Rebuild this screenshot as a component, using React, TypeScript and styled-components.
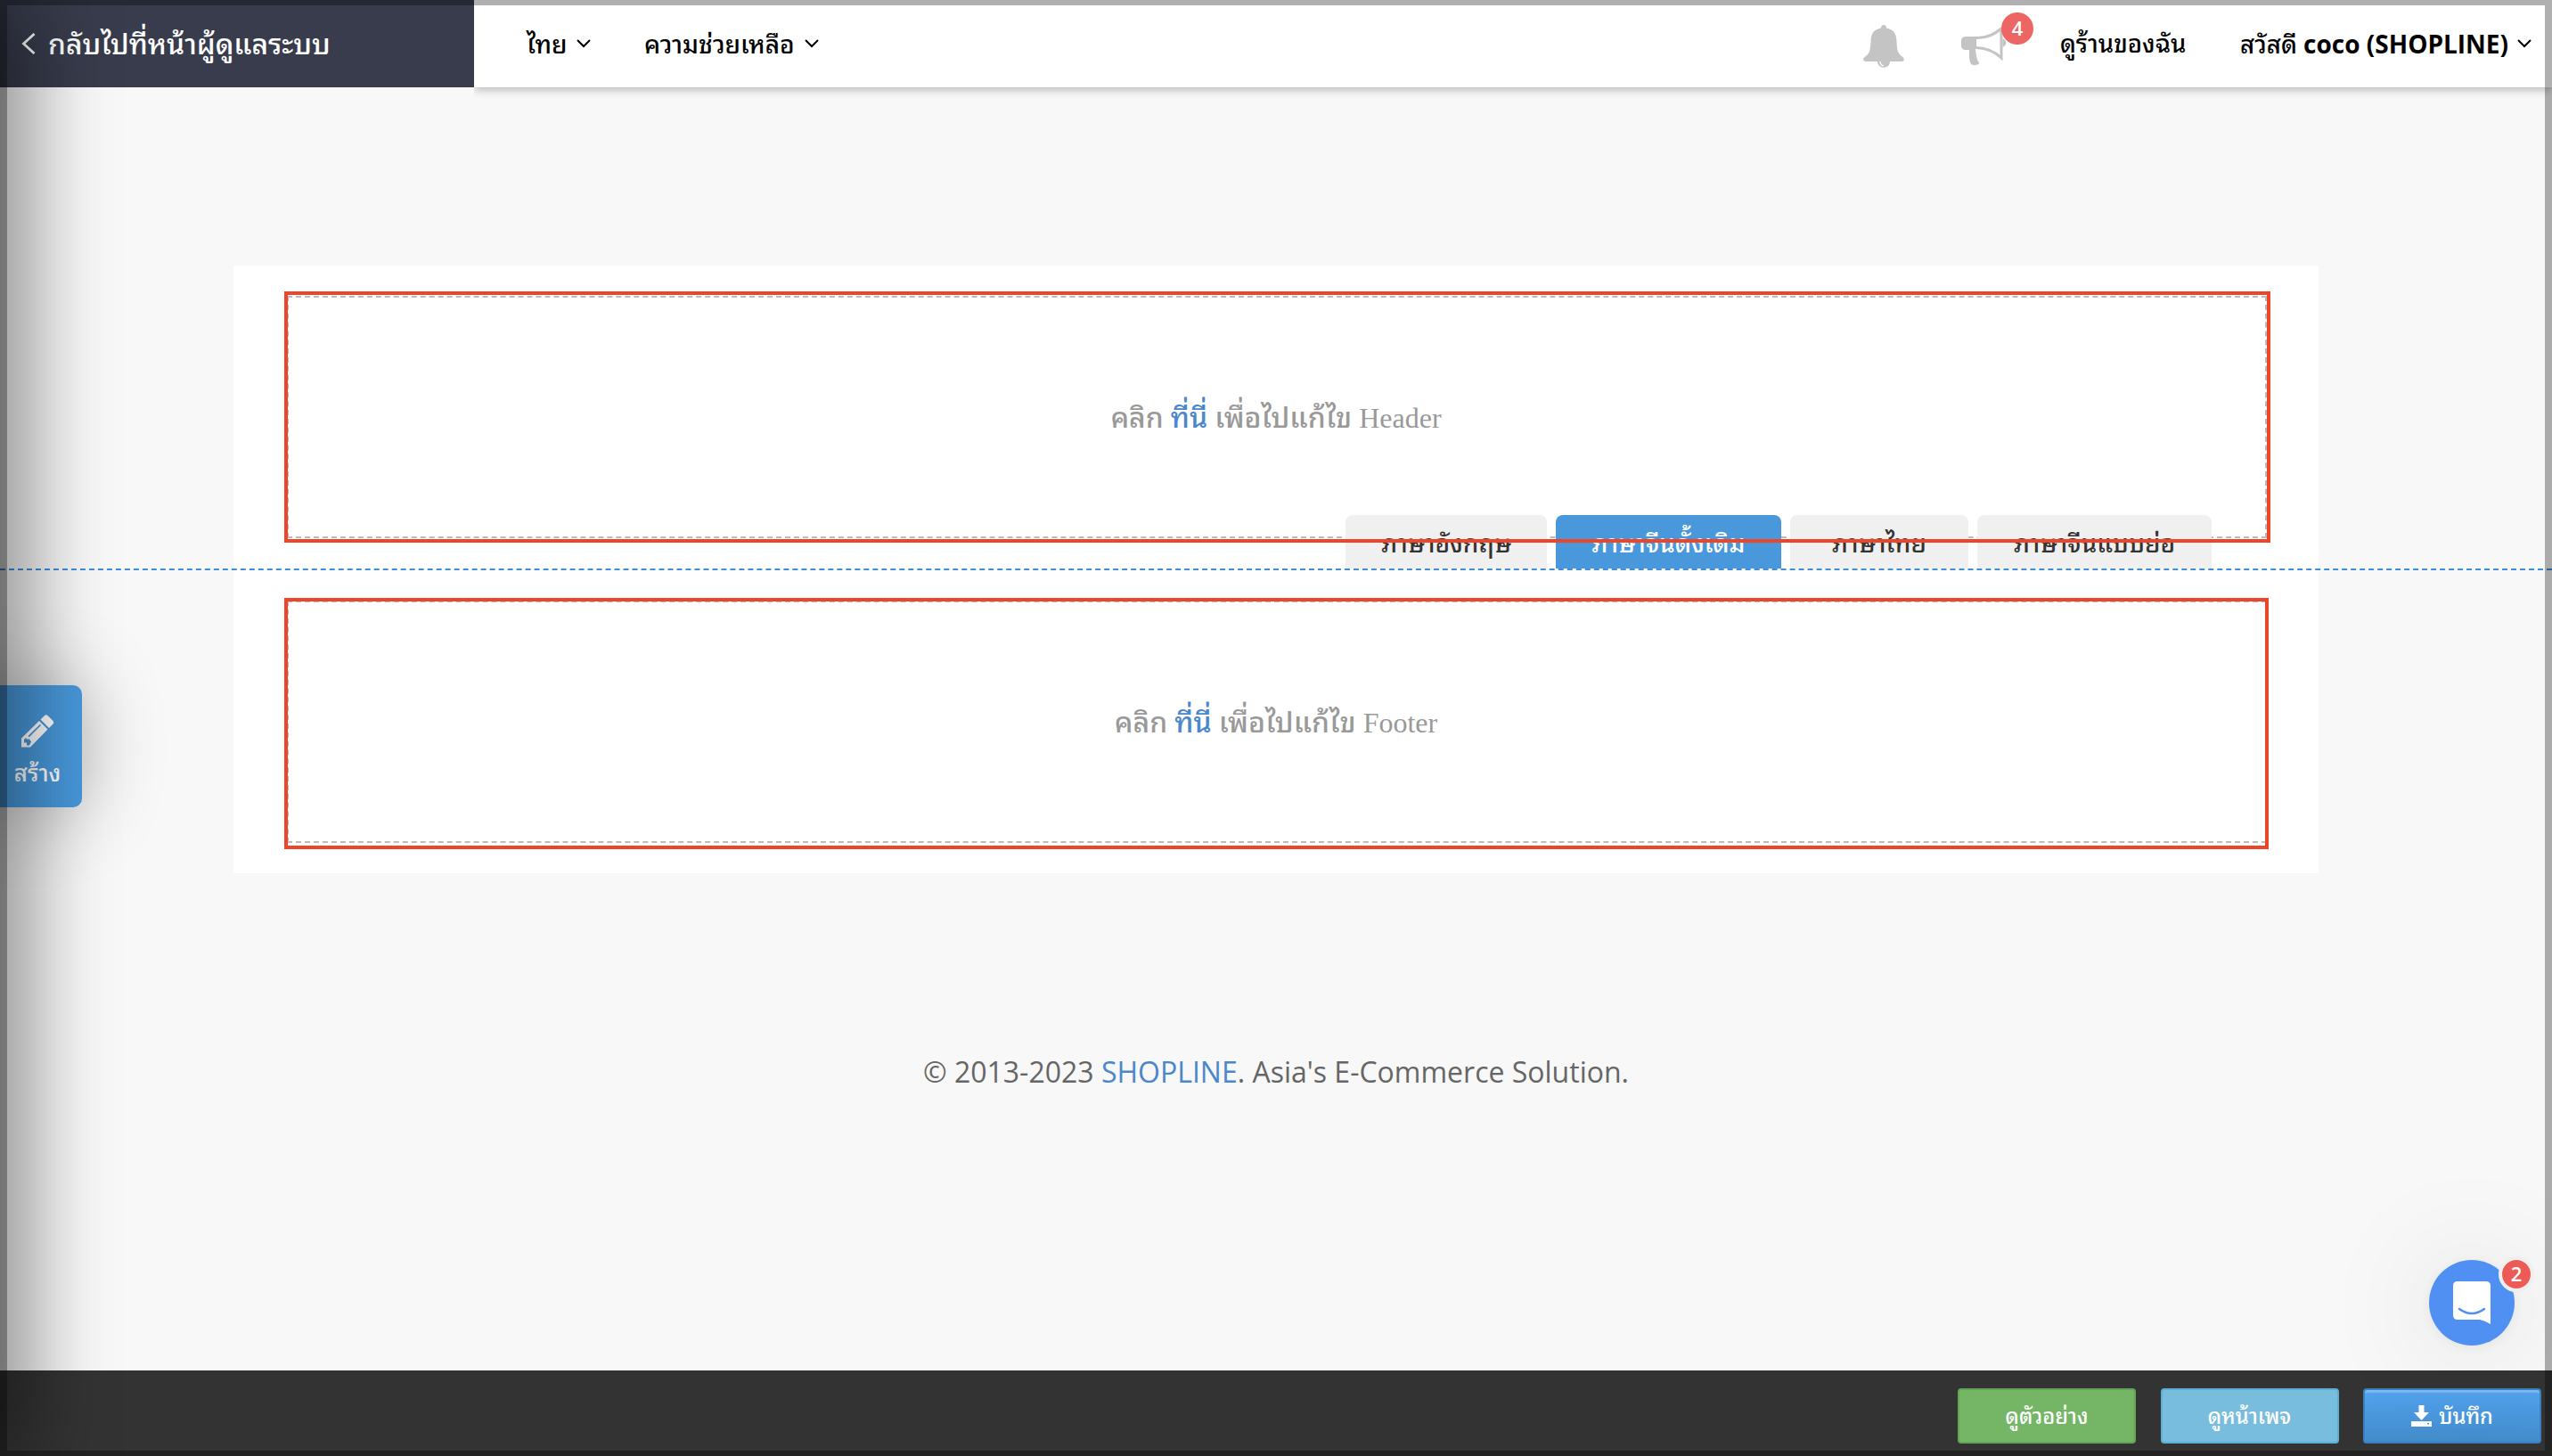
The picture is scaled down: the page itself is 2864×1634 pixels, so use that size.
import React from "react";
import styled, { createGlobalStyle, css } from "styled-components";

const Global = createGlobalStyle`
  * { box-sizing: border-box; }
  body { margin: 0; background: #f8f8f8; }
`;

const sans = `"Open Sans", "Noto Sans Thai Looped", "Noto Sans Thai", "Noto Sans", sans-serif`;

const Page = styled.div`
  position: relative;
  display: flex;
  flex-direction: column;
  width: 2864px;
  height: 1634px;
  overflow: hidden;
  background: #f8f8f8;
  font-family: ${sans};
  color: #000;
`;

const Label = styled.span<{ $w?: number; $size: number }>`
  display: block;
  flex: none;
  width: ${(p) => (p.$w ? `${p.$w}px` : "auto")};
  font-size: ${(p) => p.$size}px;
  font-weight: 500;
  line-height: 40px;
  white-space: nowrap;
`;

const UserName = styled.b`
  font-size: 28px;
  font-weight: 700;
`;

const TopBar = styled.header`
  display: flex;
  height: 98px;
  flex: none;
`;

const BackLink = styled.a`
  display: flex;
  align-items: center;
  width: 532px;
  padding: 0 0 1px 24px;
  gap: 14px;
  background: #383c4c;
  color: #fff;
`;

const Nav = styled.nav`
  display: flex;
  align-items: center;
  flex: 1;
  padding: 0 23px 0 59px;
  background: #fff;
  box-shadow: 0 2px 10px rgba(0, 0, 0, 0.3);
  clip-path: inset(0 0 -20px 0);
`;

const NavItem = styled.a<{ $left?: number }>`
  display: flex;
  align-items: center;
  gap: 8px;
  margin-left: ${(p) => p.$left ?? 0}px;
`;

const Spacer = styled.div`
  flex: 1;
`;

const IconSlot = styled.div<{ $left?: number }>`
  position: relative;
  display: flex;
  margin-left: ${(p) => p.$left ?? 0}px;
  margin-top: 6px;
`;

const CountBadge = styled.span`
  position: absolute;
  left: 45px;
  top: -16px;
  width: 36px;
  height: 36px;
  border-radius: 50%;
  background: #ee6664;
  color: #fff;
  font-size: 22px;
  font-weight: 600;
  line-height: 35px;
  text-align: center;
`;

const Workspace = styled.main`
  display: flex;
  flex-direction: column;
  align-items: center;
  flex: 1;
  padding-top: 200px;
`;

const Canvas = styled.section`
  display: flex;
  flex-direction: column;
  width: 2340px;
  height: 682px;
  padding: 34px 58px 0 60px;
  background: #fff;
`;

const DropZone = styled.div`
  position: relative;
  display: flex;
  justify-content: center;
  height: 272px;
  padding-top: 113px;
  border: 2px dashed #bbb;
  font-family: "Liberation Serif", "Noto Sans Thai Looped", "Noto Sans Thai", serif;
  color: #999;
`;

const Highlight = styled.div<{ $top: number; $right: number }>`
  position: absolute;
  z-index: 3;
  left: -5px;
  right: ${(p) => p.$right}px;
  top: ${(p) => p.$top}px;
  height: 282px;
  border: 4px solid #ee4427;
`;

const Hint = styled.p`
  margin: 0 2px 0 0;
  font-size: 32px;
  font-weight: 500;
  line-height: 44px;
  white-space: nowrap;
`;

const Link = styled.a`
  color: #4b87cb;
`;

const Divider = styled.div`
  height: 70px;
  padding-top: 34px;
`;

const DashedLine = styled.div`
  position: relative;
  z-index: 1;
  width: 2864px;
  margin-left: -322px;
  border-top: 2px dashed #3f8ede;
`;

const Tabs = styled.div`
  position: absolute;
  right: 60px;
  bottom: -36px;
  display: flex;
  gap: 10px;
  font-family: ${sans};
`;

const Tab = styled.div<{ $w: number; $active?: boolean }>`
  display: flex;
  justify-content: center;
  width: ${(p) => p.$w}px;
  height: 60px;
  padding-top: 11px;
  border-radius: 8px 8px 0 0;
  background: ${(p) => (p.$active ? "#4898db" : "#f0f0f0")};
  color: ${(p) => (p.$active ? "#fff" : "#333")};
`;

const Copyright = styled.p`
  margin: 201px 0 0;
  color: #666;
  font-size: 32px;
  line-height: 44px;
  white-space: nowrap;
`;

const ActionBar = styled.footer`
  display: flex;
  justify-content: flex-end;
  gap: 27.5px;
  height: 96px;
  flex: none;
  padding: 20px 12px 0 0;
  background: #333;
`;

const tones = {
  green: css`
    background: #74b566;
    border-color: #62a655;
  `,
  sky: css`
    background: #78bddd;
    border-color: #5cb0d5;
  `,
  blue: css`
    background: linear-gradient(#52a3ee, #428bca);
    border-color: #3a80c0;
    box-shadow: inset 0 3px 1px rgba(255, 255, 255, 0.25);
  `,
};

const ActionButton = styled.button<{ $tone: keyof typeof tones }>`
  display: flex;
  align-items: center;
  justify-content: center;
  gap: 8px;
  width: 200px;
  height: 62px;
  padding: 0;
  border: 2px solid;
  border-radius: 4px;
  color: #fff;
  font-family: inherit;
  ${(p) => tones[p.$tone]}
`;

const SideShade = styled.div`
  position: absolute;
  z-index: 5;
  left: -40px;
  top: 0;
  width: 40px;
  height: 1634px;
  box-shadow: 0 0 104px 13px rgba(0, 0, 0, 0.7);
`;

const CreateButton = styled.button`
  position: absolute;
  z-index: 4;
  left: -10px;
  top: 769px;
  display: flex;
  flex-direction: column;
  align-items: center;
  gap: 7px;
  width: 102px;
  height: 137px;
  padding: 33px 0 0 2px;
  border: 0;
  border-radius: 10px;
  background: #4898db;
  box-shadow: 0 0 90px rgba(0, 0, 0, 0.3);
  color: #fff;
  font-family: inherit;
`;

const Chat = styled.div`
  position: absolute;
  z-index: 4;
  left: 2726px;
  top: 1414px;
  display: flex;
  align-items: center;
  justify-content: center;
  width: 96px;
  height: 96px;
  border-radius: 50%;
  background: #5190f3;
  box-shadow: 0 2px 12px rgba(0, 0, 0, 0.06), 0 4px 130px rgba(0, 0, 0, 0.13);
`;

const ChatBadge = styled.span`
  position: absolute;
  left: 78px;
  top: -4px;
  width: 40px;
  height: 40px;
  border: 4px solid #efefef;
  border-radius: 50%;
  background: #ec5b55;
  color: #fff;
  font-size: 22px;
  font-weight: 600;
  line-height: 31px;
  text-align: center;
`;

const Frame = styled.div`
  position: absolute;
  z-index: 6;
  inset: 0;
  border: solid rgba(0, 0, 0, 0.31);
  border-width: 6px 8px;
  pointer-events: none;
`;

const ChevronDown = () => (
  <svg width="16" height="10" viewBox="0 0 16 10" fill="none" stroke="#000" strokeWidth="2">
    <path d="M1 1l7 7 7-7" />
  </svg>
);

const ChevronLeft = () => (
  <svg width="16" height="24" viewBox="0 0 16 24" fill="none" stroke="#fff" strokeWidth="2.8">
    <path d="M14.500 1L2.500 12l12 11" />
  </svg>
);

const Bell = () => (
  <svg width="52" height="48" viewBox="0 0 52 48" fill="#c4c4c4">
    <path d="M26 0c2 0 3 1.600 3 3.600C37 5 40 10 40.400 17c.5 11 1 15 7 19 2.500 2 1.500 5-1 5H5.600c-2.500 0-3.500-3-1-5 6-4 6.500-8 7-19C12 10 15 5 23 3.600 23 1.600 24 0 26 0z" />
    <path d="M19 41h14c0 9-14 9-14 0z" />
    <path d="M22 41c0 3 1.500 4.500 4 5" fill="none" stroke="#fff" strokeWidth="1.300" />
  </svg>
);

const Megaphone = () => (
  <svg width="52" height="44" viewBox="0 0 52 44" fill="#c4c4c4">
    <path d="M5 11h13v14H16c1 7 1 11 4 15.500 0 2-3 2.500-6 2.500-5 0-5-7-5-17H5c-3 0-5-2-5-4v-7c0-2 2-4 5-4z" />
    <path d="M17 12.500C29 13 37 9 45 2v33C37 27 29 24 17 23.500" fill="#fff" stroke="#c4c4c4" strokeWidth="3" />
    <path d="M46.500 13c5 2 5 8 0 10z" />
  </svg>
);

const Pencil = () => (
  <svg width="38" height="38" viewBox="0 0 38 38" fill="#fff">
    <path d="M22.500 5.500L27 1q1.500-1.300 3.500 0l6 6q1.300 1.500 0 3.500L32 15z" />
    <path fillRule="evenodd" d="M21 7l9.500 9.500L11 36.500H1V26.500zM4 28l0 3.500 3 0 0 3 3 0 2-4-2-3-3 0-1-1.500zM8.500 24l1.300 1.300L23 12l-1-1.200z" />
  </svg>
);

const SaveIcon = () => (
  <svg width="23" height="24" viewBox="0 0 23 24" fill="#fff">
    <path d="M8.500 0h6v8H20l-8.500 9L3 8h5.500z" />
    <path fillRule="evenodd" d="M0 18h23v6H0zM18 20v1.500h2V20z" />
  </svg>
);

const ChatIcon = () => (
  <svg width="42" height="48" viewBox="0 0 42 48">
    <path d="M5 0h32q5 0 5 5v43q-7-4-12-5H5q-5 0-5-5V5q0-5 5-5z" fill="#fff" />
    <path d="M7 31q14 10 28 0" fill="none" stroke="#5190f3" strokeWidth="2.600" strokeLinecap="round" />
  </svg>
);

export default function App() {
  return (
    <Page>
      <Global />
      <TopBar>
        <BackLink>
          <ChevronLeft />
          <Label $size={31.8}>กลับไปที่หน้าผู้ดูแลระบบ</Label>
        </BackLink>
        <Nav>
          <NavItem>
            <Label $size={28} $w={48}>ไทย</Label>
            <ChevronDown />
          </NavItem>
          <NavItem $left={60}>
            <Label $size={28} $w={172}>ความช่วยเหลือ</Label>
            <ChevronDown />
          </NavItem>
          <Spacer />
          <IconSlot>
            <Bell />
          </IconSlot>
          <IconSlot $left={61}>
            <Megaphone />
            <CountBadge>4</CountBadge>
          </IconSlot>
          <NavItem $left={59}>
            <Label $size={27.5} $w={142}>ดูร้านของฉัน</Label>
          </NavItem>
          <NavItem $left={60}>
            <Label $size={27.7} $w={303}>
              สวัสดี <UserName>coco (SHOPLINE)</UserName>
            </Label>
            <ChevronDown />
          </NavItem>
        </Nav>
      </TopBar>

      <Workspace>
        <Canvas>
          <DropZone>
            <Highlight $top={-7} $right={-6} />
            <Hint>
              คลิก <Link>ที่นี่</Link> เพื่อไปแก้ไข Header
            </Hint>
            <Tabs>
              <Tab $w={226}><Label $size={28}>ภาษาอังกฤษ</Label></Tab>
              <Tab $w={253} $active><Label $size={28}>ภาษาจีนดั้งเดิม</Label></Tab>
              <Tab $w={200}><Label $size={28}>ภาษาไทย</Label></Tab>
              <Tab $w={263}><Label $size={28}>ภาษาจีนแบบย่อ</Label></Tab>
            </Tabs>
          </DropZone>
          <Divider>
            <DashedLine />
          </Divider>
          <DropZone>
            <Highlight $top={-5} $right={-4} />
            <Hint>
              คลิก <Link>ที่นี่</Link> เพื่อไปแก้ไข Footer
            </Hint>
          </DropZone>
        </Canvas>
        <Copyright>
          © 2013-2023 <Link>SHOPLINE</Link>. Asia's E-Commerce Solution.
        </Copyright>
      </Workspace>

      <ActionBar>
        <ActionButton $tone="green"><Label $size={23.6}>ดูตัวอย่าง</Label></ActionButton>
        <ActionButton $tone="sky"><Label $size={23.6}>ดูหน้าเพจ</Label></ActionButton>
        <ActionButton $tone="blue">
          <SaveIcon />
          <Label $size={23.6}>บันทึก</Label>
        </ActionButton>
      </ActionBar>

      <CreateButton>
        <Pencil />
        <Label $size={26}>สร้าง</Label>
      </CreateButton>
      <Chat>
        <ChatIcon />
        <ChatBadge>2</ChatBadge>
      </Chat>
      <SideShade />
      <Frame />
    </Page>
  );
}
